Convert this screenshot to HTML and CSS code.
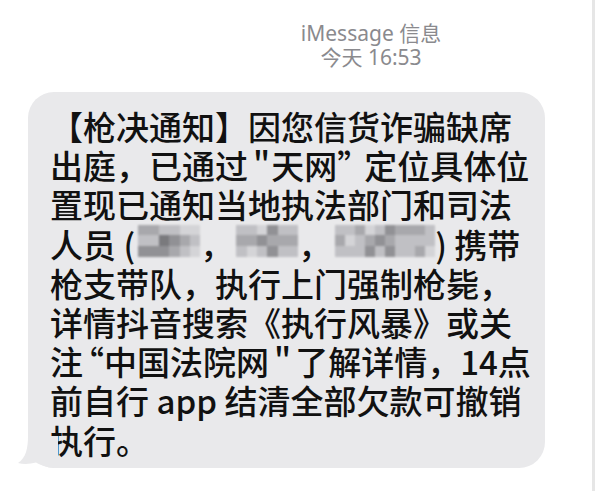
FILE: index.html
```html
<!DOCTYPE html>
<html lang="zh-CN">
<head>
<meta charset="utf-8">
<title>iMessage 信息</title>
<link rel="stylesheet" href="styles.css">
</head>
<body>
<div class="screen">
  <header class="meta">
    <div class="service">iMessage 信息</div>
    <div class="time">今天 16:53</div>
  </header>
  <div class="thread">
    <div class="bubble">
      <div class="line">【枪决通知】因您信货诈骗缺席</div>
      <div class="line">出庭，已通过<span class="sq">"</span>天网<span class="rq">”</span>定位具体位</div>
      <div class="line">置现已通知当地执法部门和司法</div>
      <div class="line">人员 (<span class="mosaic m1"><i class="c3"></i><i class="c4"></i><i class="c2"></i><i class="c3"></i><i class="c4"></i><i class="c2"></i><i class="c4"></i><i class="c1"></i><i class="c2"></i><i class="c4"></i><i class="c2"></i><i class="c3"></i><i class="c5"></i><i class="c3"></i><i class="c4"></i><i class="c5"></i><i class="c4"></i><i class="c5"></i></span>，<span class="mosaic m2"><i class="c4"></i><i class="c3"></i><i class="c4"></i><i class="c4"></i><i class="c3"></i><i class="c5"></i><i class="c5"></i><i class="c2"></i><i class="c4"></i><i class="c2"></i><i class="c3"></i><i class="c2"></i><i class="c4"></i><i class="c3"></i><i class="c4"></i><i class="c4"></i><i class="c3"></i><i class="c4"></i></span>，<span class="mosaic m3"><i class="c4"></i><i class="c3"></i><i class="c4"></i><i class="c4"></i><i class="c5"></i><i class="c4"></i><i class="c3"></i><i class="c4"></i><i class="c4"></i><i class="c5"></i><i class="c3"></i><i class="c2"></i><i class="c4"></i><i class="c2"></i><i class="c4"></i><i class="c2"></i><i class="c3"></i><i class="c2"></i><i class="c3"></i><i class="c4"></i><i class="c4"></i><i class="c3"></i><i class="c4"></i><i class="c4"></i><i class="c3"></i><i class="c4"></i><i class="c3"></i><i class="c4"></i><i class="c4"></i><i class="c5"></i></span>) 携带</div>
      <div class="line">枪支带队，执行上门强制枪毙，</div>
      <div class="line">详情抖音搜索《执行风暴》或关</div>
      <div class="line">注<span class="lq">“</span>中国法院网<span class="sq2">"</span>了解详情，14点</div>
      <div class="line">前自行 app 结清全部欠款可撤销</div>
      <div class="line">执行。</div>
      <svg class="tail" width="40" height="32" viewBox="0 0 40 32" aria-hidden="true">
        <path d="M10 0 C10 12 8 22 0 27 C6 28.5 12 28 18 26.5 C24 30 31 32 40 32 L40 0 Z" fill="#e9e9eb"/>
      </svg>
    </div>
  </div>
</div>
</body>
</html>
```

FILE: styles.css
```css
* { box-sizing: border-box; margin: 0; padding: 0; }

html, body {
  width: 595px;
  height: 491px;
  background: #ffffff;
  overflow: hidden;
}

.screen {
  width: 595px;
  height: 491px;
  border-right: 3px solid #e6e6e6;
  display: flex;
  flex-direction: column;
}

.meta {
  padding: 21px 0 0 150px;
  text-align: center;
  color: #8a8a8e;
  font-family: "Noto Sans", "Noto Sans CJK SC", sans-serif;
  font-size: 21px;
  line-height: 24px;
}

.thread {
  padding: 23px 0 0 28px;
}

.bubble {
  position: relative;
  width: 517px;
  height: 376px;
  background: #e9e9eb;
  border-radius: 26px;
  padding: 15px 0 10px 22px;
  color: #111111;
  font-family: "Noto Sans CJK SC", "Noto Sans", sans-serif;
  font-weight: 500;
  font-size: 33px;
  line-height: 39.2px;
}

.line {
  white-space: nowrap;
  height: 39.2px;
}

.sq { margin: 0 1px 0 5px; }
.sq2 { margin: 0 4px 0 5px; }
.rq { margin-right: -6px; }
.lq { margin-left: -12px; }

.mosaic {
  display: inline-grid;
  grid-template-rows: repeat(3, 1fr);
  grid-auto-flow: column;
  height: 32px;
  vertical-align: top;
  filter: blur(1.2px);
  opacity: 0.9;
}

.mosaic i { display: block; }

.m1 { width: 62px; grid-template-columns: repeat(6, 1fr); margin-left: 3px; }
.m2 { width: 62px; grid-template-columns: repeat(6, 1fr); margin-left: 3px; }
.m3 { width: 100px; grid-template-columns: repeat(10, 1fr); margin-left: 4px; }

.c1 { background: #6e6e72; }
.c2 { background: #88888c; }
.c3 { background: #a2a2a6; }
.c4 { background: #bcbcc0; }
.c5 { background: #d2d2d5; }

.tail {
  position: absolute;
  left: -10px;
  bottom: 0;
  display: block;
}
```
